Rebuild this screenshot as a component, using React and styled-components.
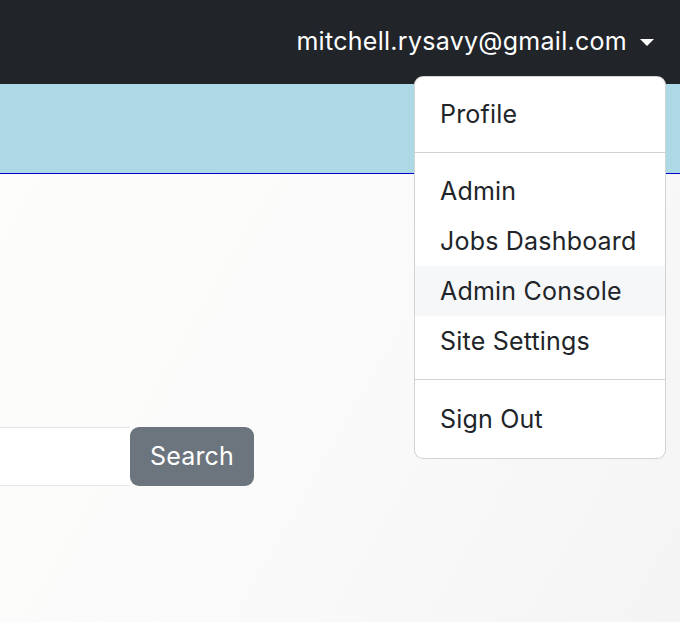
import React, { useState } from "react";
import styled, { createGlobalStyle } from "styled-components";

const Global = createGlobalStyle`
  html, body {
    margin: 0;
    padding: 0;
    font-family: Inter, "Noto Sans", "Liberation Sans", sans-serif;
    font-size: 25px;
    letter-spacing: 0.2px;
    line-height: 1.5;
    color: #212529;
  }
  * { box-sizing: border-box; }
`;

const Page = styled.div`
  position: relative;
  width: 680px;
  height: 622px;
  overflow: hidden;
  display: flex;
  flex-direction: column;
  background: linear-gradient(120deg, #fdfdfb 0%, #fafafa 55%, #f4f4f5 100%);
`;

const Navbar = styled.nav`
  height: 84px;
  flex: none;
  background: #212529;
  display: flex;
  justify-content: flex-end;
  align-items: center;
  padding-right: 26px;
`;

const UserToggle = styled.button`
  background: none;
  border: 0;
  padding: 0;
  color: #fff;
  font: inherit;
  letter-spacing: 0.28px;
  display: flex;
  align-items: center;
  cursor: pointer;
`;

const Caret = styled.span`
  display: inline-block;
  margin-left: 13px;
  margin-top: 1px;
  border-top: 7px solid #fff;
  border-left: 7px solid transparent;
  border-right: 7px solid transparent;
`;

const Banner = styled.div`
  height: 90px;
  flex: none;
  background: #add8e6;
  border-bottom: 1px solid #0000cd;
`;

const Main = styled.main`
  flex: 1;
  padding-top: 253px;
`;

const SearchRow = styled.form`
  display: flex;
  margin-left: -200px;
`;

const SearchInput = styled.input`
  width: 330px;
  height: 59px;
  border: 1px solid #e5e5e5;
  border-right: 0;
  background: #fff;
  font: inherit;
  padding: 0 18px;
  outline: none;
`;

const SearchButton = styled.button`
  height: 59px;
  width: 124px;
  border: 0;
  border-radius: 9px;
  background: #6c757d;
  color: #fff;
  font: inherit;
  letter-spacing: inherit;
  cursor: pointer;
`;

const Menu = styled.ul`
  position: absolute;
  top: 76px;
  right: 14px;
  width: 252px;
  margin: 0;
  padding: 12px 0 14px;
  list-style: none;
  background: #fff;
  border: 1px solid rgba(0, 0, 0, 0.175);
  border-radius: 9px;
`;

const Item = styled.li`
  padding: 7px 25px;
  line-height: 36px;
  color: #212529;
  background: ${(p) => (p.$active ? "#f6f7f9" : "transparent")};
  white-space: nowrap;
  cursor: pointer;
`;

const Divider = styled.li`
  height: 0;
  margin: ${(p) => (p.$wide ? "13px 0 14px" : "13px 0")};
  border-top: 1px solid rgba(0, 0, 0, 0.175);
`;

const groups = [
  ["Profile"],
  ["Admin", "Jobs Dashboard", "Admin Console", "Site Settings"],
  ["Sign Out"],
];

export default function App() {
  const [hover, setHover] = useState("Admin Console");

  return (
    <>
      <Global />
      <Page>
        <Navbar>
          <UserToggle type="button">
            mitchell.rysavy@gmail.com
            <Caret />
          </UserToggle>
        </Navbar>
        <Banner />
        <Main>
          <SearchRow onSubmit={(e) => e.preventDefault()}>
            <SearchInput type="text" />
            <SearchButton type="submit">Search</SearchButton>
          </SearchRow>
        </Main>
        <Menu>
          {groups.map((g, gi) => (
            <React.Fragment key={gi}>
              {gi > 0 && <Divider $wide={gi === 2} />}
              {g.map((label) => (
                <Item
                  key={label}
                  $active={hover === label}
                  onMouseEnter={() => setHover(label)}
                >
                  {label}
                </Item>
              ))}
            </React.Fragment>
          ))}
        </Menu>
      </Page>
    </>
  );
}
